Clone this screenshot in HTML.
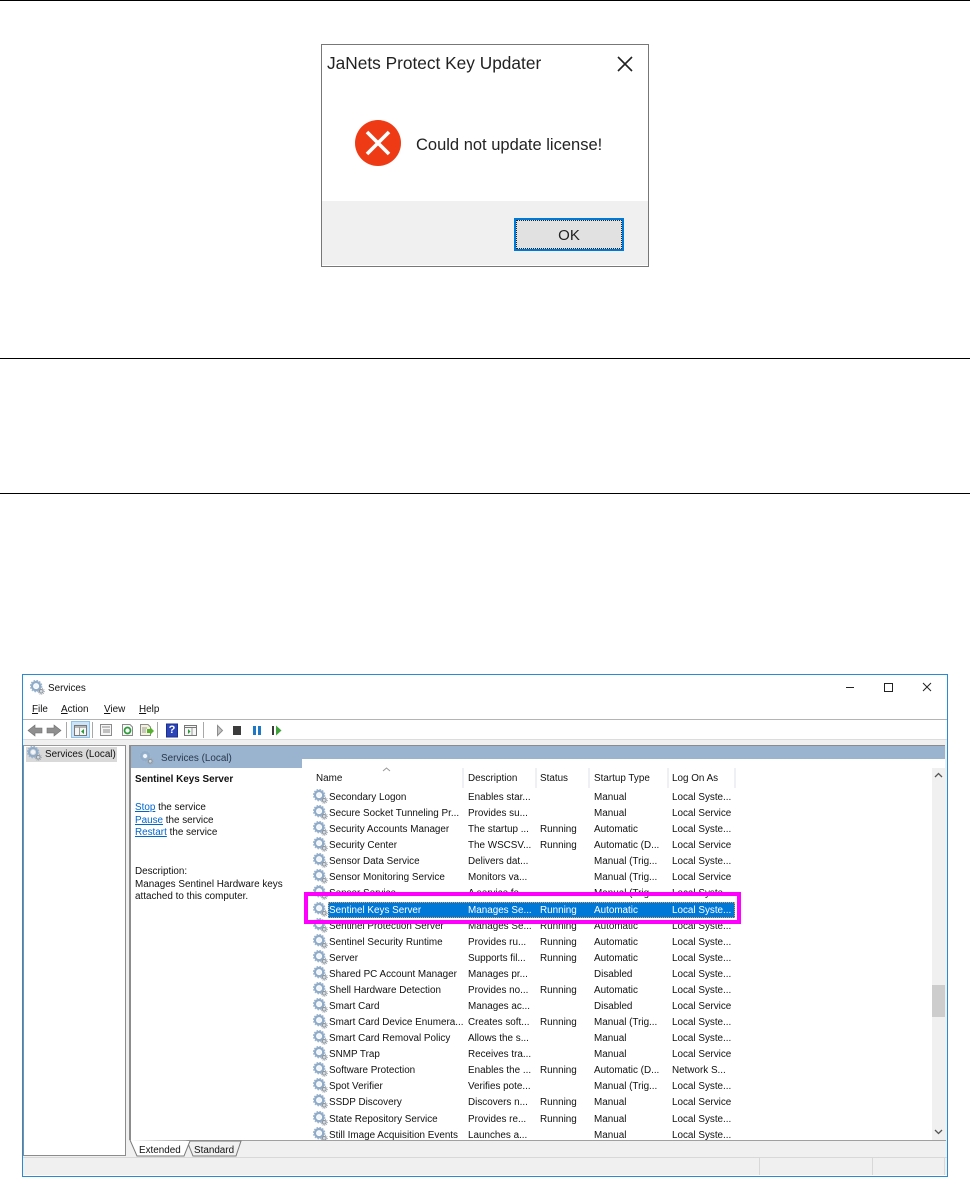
<!DOCTYPE html>
<html>
<head>
<meta charset="utf-8">
<title>Services</title>
<style>
html,body{margin:0;padding:0;background:#fff}
body{position:relative;width:970px;height:1181px;overflow:hidden;font-family:"Liberation Sans",sans-serif;color:#111}
#w{position:absolute;left:0;top:0;width:970px;height:1181px;filter:blur(.3px)}
.a{position:absolute}
.t{position:absolute;margin-top:1px;font-size:9.9px;line-height:14px;white-space:nowrap;color:#111}
.n{margin-top:0}
.rule{position:absolute;left:0;width:970px;height:1px;background:#000}
#rows{position:absolute;left:300px;top:789px;width:632px;height:351px;overflow:hidden}
.r{position:relative;height:16.09px;font-size:9.9px;line-height:16px;white-space:nowrap;color:#111}
.r svg{position:absolute;left:13px;top:0;width:15px;height:15px}
.r span{position:absolute;top:0}
.r span:nth-of-type(1){left:29px}
.r span:nth-of-type(2){left:168px}
.r span:nth-of-type(3){left:240px}
.r span:nth-of-type(4){left:294px}
.r span:nth-of-type(5){left:372px}
.r span{top:1px}
.sel{color:#fff}
.sel:before{content:"";position:absolute;left:28px;top:0;width:405px;height:14px;background:#0078d7;border:1px dotted #f0a050}
.h{position:absolute;top:768px;width:2px;height:20px;background:#eef0f3}
a{color:#0066cc;text-decoration:underline}
</style>
</head>
<body>
<svg width="0" height="0" style="position:absolute">
<symbol id="g" viewBox="0 0 16 16">
<circle cx="6.5" cy="6.5" r="4.4" fill="none" stroke="#8fabc8" stroke-width="2.4"/>
<circle cx="6.5" cy="6.5" r="5.9" fill="none" stroke="#9db6cf" stroke-width="1.5" stroke-dasharray="1.8 1.3"/>
<circle cx="6.5" cy="6.5" r="2.2" fill="#f2f6fa"/>
<circle cx="12" cy="12" r="2" fill="#d4dae0" stroke="#8a939c" stroke-width="1.1"/>
<circle cx="12" cy="12" r="3.3" fill="none" stroke="#a0a8b0" stroke-width="1" stroke-dasharray="1 1"/>
</symbol>
</svg>
<div id="w">
<div class="rule" style="top:0"></div>
<div class="rule" style="top:358px"></div>
<div class="rule" style="top:493px"></div>

<!-- Dialog -->
<div class="a" style="left:321px;top:44px;width:326px;height:221px;border:1px solid #777;background:#fff"></div>
<div class="a" style="left:322px;top:201px;width:326px;height:64px;background:#f0f0f0"></div>
<div class="t n" style="left:327px;top:52px;font-size:17.3px;line-height:22px;color:#222">JaNets Protect Key Updater</div>
<svg class="a" style="left:616px;top:55px" width="18" height="18" viewBox="0 0 18 18"><path d="M2 2L16 16M16 2L2 16" stroke="#222" stroke-width="1.6" fill="none"/></svg>
<svg class="a" style="left:354px;top:119px" width="48" height="48" viewBox="0 0 48 48"><circle cx="24" cy="24" r="23" fill="#ee3b16"/><path d="M13 13L35 35M35 13L13 35" stroke="#fff" stroke-width="3.6" fill="none"/></svg>
<div class="t" style="left:416px;top:134px;font-size:16.5px;line-height:20px;color:#222">Could not update license!</div>
<div class="a" style="left:514px;top:218px;width:106px;height:29px;border:2px solid #0078d7;background:#e1e1e1"></div>
<div class="a" style="left:516px;top:220px;width:106px;height:29px;border:1px dotted #222;box-sizing:border-box"></div>
<div class="t" style="left:514px;width:110px;top:225px;text-align:center;font-size:15px;line-height:20px;color:#222">OK</div>

<!-- Services window -->
<div class="a" style="left:22px;top:674px;width:924px;height:501px;border:1px solid #2a8ad4;background:#fff"></div>
<div class="a" style="left:23px;top:719px;width:924px;height:1px;background:#b4b4b4"></div>
<div class="a" style="left:23px;top:739px;width:924px;height:418px;background:#f0f0f0"></div>
<div class="a" style="left:23px;top:739px;width:924px;height:1px;background:#dcdcdc"></div>
<div class="a" style="left:23px;top:1157px;width:924px;height:18px;background:#f0f0f0;border-top:1px solid #d8d8d8;box-sizing:border-box"></div>
<div class="a" style="left:759px;top:1157px;width:1px;height:18px;background:#d8d8d8"></div>
<div class="a" style="left:872px;top:1157px;width:1px;height:18px;background:#d8d8d8"></div>
<div class="a" style="left:944px;top:1157px;width:1px;height:18px;background:#d8d8d8"></div>

<svg class="a" style="left:30px;top:680px" width="15" height="15"><use href="#g"/></svg>
<div class="t" style="left:48px;top:681px">Services</div>
<svg class="a" style="left:846px;top:680px" width="90" height="14" viewBox="0 0 90 14"><path d="M0 7.5H8" stroke="#222" stroke-width="1"/><rect x="38.5" y="3.5" width="8" height="8" fill="none" stroke="#222"/><path d="M77 3L85 11M85 3L77 11" stroke="#222" stroke-width="1" fill="none"/></svg>

<div class="t n" style="left:32px;top:703px"><u>F</u>ile</div>
<div class="t n" style="left:61px;top:703px"><u>A</u>ction</div>
<div class="t n" style="left:104px;top:703px"><u>V</u>iew</div>
<div class="t n" style="left:139px;top:703px"><u>H</u>elp</div>

<!-- Toolbar -->
<svg class="a" style="left:23px;top:720px" width="270" height="19" viewBox="23 720 270 19">
<path d="M28 730.5L35 725V728H42V733H35V736Z" fill="#8f8f8f" stroke="#6f6f6f" stroke-width=".6"/>
<path d="M61 730.5L54 725V728H47V733H54V736Z" fill="#8f8f8f" stroke="#6f6f6f" stroke-width=".6"/>
<rect x="66" y="722" width="1" height="16" fill="#a8a8a8"/>
<rect x="71.5" y="721.5" width="18" height="16" fill="#cce4f7" stroke="#8fc3ea"/>
<rect x="74.5" y="725.5" width="12" height="10" fill="#f6f6f6" stroke="#777"/>
<path d="M75 727H86" stroke="#777"/><path d="M79.5 727V735" stroke="#999"/><path d="M84 729V734L81 731.5Z" fill="#2a9a3a"/>
<rect x="92" y="722" width="1" height="16" fill="#a8a8a8"/>
<rect x="100.5" y="724.5" width="11" height="11" fill="#f6f6f6" stroke="#8a8a8a"/>
<path d="M102 727H110M103 730H110M103 732H110" stroke="#8a8a8a"/>
<path d="M122.5 724.5H130L132.5 727V735.5H122.5Z" fill="#f8f8f8" stroke="#8a8a8a"/>
<circle cx="127.5" cy="730.5" r="3" fill="none" stroke="#2d9a3c" stroke-width="1.7"/>
<path d="M140.5 724.5H148L150.5 727V735.5H140.5Z" fill="#f4f2dc" stroke="#8a8a8a"/>
<path d="M142 728H147M142 730H146M142 732H146" stroke="#999"/>
<path d="M147 729H150V727L154 731L150 735V733H147Z" fill="#58b030"/>
<rect x="157" y="722" width="1" height="16" fill="#a8a8a8"/>
<rect x="166.5" y="724" width="11" height="13" fill="#2b44b8" stroke="#1c2f8c"/>
<rect x="184.5" y="725.5" width="12" height="10" fill="#f6f6f6" stroke="#777"/>
<path d="M185 727.5H196" stroke="#777"/><path d="M192 728V735" stroke="#999"/><path d="M188 729V734L190.5 731.5Z" fill="#2a9a3a"/>
<rect x="203" y="722" width="1" height="16" fill="#a8a8a8"/>
<path d="M217.5 725.5L222.5 730.5L217.5 735.5Z" fill="#c4c4c4" stroke="#8c8c8c"/>
<rect x="233" y="726" width="8" height="9" fill="#3c3c3c"/>
<rect x="253" y="726" width="3" height="9" fill="#1e78c8"/><rect x="258" y="726" width="3" height="9" fill="#1e78c8"/>
<rect x="272" y="726" width="2" height="9" fill="#3c3c3c"/><path d="M276 725.5L281.5 730.5L276 735.5Z" fill="#3fa53a"/>
</svg>
<div class="t n" style="left:166px;top:723px;width:12px;text-align:center;color:#fff;font-weight:bold;font-size:11px">?</div>

<!-- Left pane -->
<div class="a" style="left:23px;top:745px;width:103px;height:411px;border:1px solid #8c8c8c;border-top:1px solid #9a9a9a;box-sizing:border-box;background:#fff"></div>
<div class="a" style="left:26px;top:747px;width:91px;height:15px;background:#d9d9d9"></div>
<svg class="a" style="left:27px;top:746px" width="15" height="15"><use href="#g"/></svg>
<div class="t" style="left:45px;top:747px">Services (Local)</div>

<!-- Right pane -->
<div class="a" style="left:130px;top:745px;width:815px;height:395px;background:#fff"></div>
<div class="a" style="left:129px;top:745px;width:2px;height:395px;background:#8c8c8c"></div>
<div class="a" style="left:131px;top:745px;width:814px;height:1px;background:#8c8c8c"></div>
<div class="a" style="left:131px;top:746px;width:814px;height:13px;background:#9ab4d0"></div>
<div class="a" style="left:131px;top:759px;width:171px;height:9px;background:#9ab4d0"></div>
<div class="a" style="left:302px;top:759px;width:4px;height:4px;background:#fff;border-radius:4px 0 0 0"></div>
<svg class="a" style="left:139px;top:750px" width="15" height="15"><use href="#g"/></svg>
<div class="t" style="left:161px;top:751px;color:#28384a">Services (Local)</div>

<div class="t" style="left:135px;top:772px;font-weight:bold">Sentinel Keys Server</div>
<div class="t" style="left:135px;top:800px"><a>Stop</a> the service</div>
<div class="t" style="left:135px;top:813px"><a>Pause</a> the service</div>
<div class="t" style="left:135px;top:825px"><a>Restart</a> the service</div>
<div class="t" style="left:135px;top:864px">Description:</div>
<div class="t" style="left:135px;top:877px">Manages Sentinel Hardware keys</div>
<div class="t" style="left:135px;top:889px">attached to this computer.</div>

<!-- Column headers -->
<div class="t" style="left:316px;top:771px">Name</div>
<div class="t" style="left:468px;top:771px">Description</div>
<div class="t" style="left:540px;top:771px">Status</div>
<div class="t" style="left:594px;top:771px">Startup Type</div>
<div class="t" style="left:672px;top:771px">Log On As</div>
<div class="h" style="left:462px"></div><div class="h" style="left:535px"></div><div class="h" style="left:588px"></div><div class="h" style="left:667px"></div><div class="h" style="left:734px"></div>
<svg class="a" style="left:382px;top:767px" width="9" height="5" viewBox="0 0 9 5"><path d="M1 4L4.5 1L8 4" fill="none" stroke="#999"/></svg>

<!-- Rows -->
<div id="rows">
<div class="r"><svg><use href="#g"/></svg><span>Secondary Logon</span><span>Enables star...</span><span></span><span>Manual</span><span>Local Syste...</span></div>
<div class="r"><svg><use href="#g"/></svg><span>Secure Socket Tunneling Pr...</span><span>Provides su...</span><span></span><span>Manual</span><span>Local Service</span></div>
<div class="r"><svg><use href="#g"/></svg><span>Security Accounts Manager</span><span>The startup ...</span><span>Running</span><span>Automatic</span><span>Local Syste...</span></div>
<div class="r"><svg><use href="#g"/></svg><span>Security Center</span><span>The WSCSV...</span><span>Running</span><span>Automatic (D...</span><span>Local Service</span></div>
<div class="r"><svg><use href="#g"/></svg><span>Sensor Data Service</span><span>Delivers dat...</span><span></span><span>Manual (Trig...</span><span>Local Syste...</span></div>
<div class="r"><svg><use href="#g"/></svg><span>Sensor Monitoring Service</span><span>Monitors va...</span><span></span><span>Manual (Trig...</span><span>Local Service</span></div>
<div class="r"><svg><use href="#g"/></svg><span>Sensor Service</span><span>A service fo...</span><span></span><span>Manual (Trig...</span><span>Local Syste...</span></div>
<div class="r sel"><svg><use href="#g"/></svg><span>Sentinel Keys Server</span><span>Manages Se...</span><span>Running</span><span>Automatic</span><span>Local Syste...</span></div>
<div class="r"><svg><use href="#g"/></svg><span>Sentinel Protection Server</span><span>Manages Se...</span><span>Running</span><span>Automatic</span><span>Local Syste...</span></div>
<div class="r"><svg><use href="#g"/></svg><span>Sentinel Security Runtime</span><span>Provides ru...</span><span>Running</span><span>Automatic</span><span>Local Syste...</span></div>
<div class="r"><svg><use href="#g"/></svg><span>Server</span><span>Supports fil...</span><span>Running</span><span>Automatic</span><span>Local Syste...</span></div>
<div class="r"><svg><use href="#g"/></svg><span>Shared PC Account Manager</span><span>Manages pr...</span><span></span><span>Disabled</span><span>Local Syste...</span></div>
<div class="r"><svg><use href="#g"/></svg><span>Shell Hardware Detection</span><span>Provides no...</span><span>Running</span><span>Automatic</span><span>Local Syste...</span></div>
<div class="r"><svg><use href="#g"/></svg><span>Smart Card</span><span>Manages ac...</span><span></span><span>Disabled</span><span>Local Service</span></div>
<div class="r"><svg><use href="#g"/></svg><span>Smart Card Device Enumera...</span><span>Creates soft...</span><span>Running</span><span>Manual (Trig...</span><span>Local Syste...</span></div>
<div class="r"><svg><use href="#g"/></svg><span>Smart Card Removal Policy</span><span>Allows the s...</span><span></span><span>Manual</span><span>Local Syste...</span></div>
<div class="r"><svg><use href="#g"/></svg><span>SNMP Trap</span><span>Receives tra...</span><span></span><span>Manual</span><span>Local Service</span></div>
<div class="r"><svg><use href="#g"/></svg><span>Software Protection</span><span>Enables the ...</span><span>Running</span><span>Automatic (D...</span><span>Network S...</span></div>
<div class="r"><svg><use href="#g"/></svg><span>Spot Verifier</span><span>Verifies pote...</span><span></span><span>Manual (Trig...</span><span>Local Syste...</span></div>
<div class="r"><svg><use href="#g"/></svg><span>SSDP Discovery</span><span>Discovers n...</span><span>Running</span><span>Manual</span><span>Local Service</span></div>
<div class="r"><svg><use href="#g"/></svg><span>State Repository Service</span><span>Provides re...</span><span>Running</span><span>Manual</span><span>Local Syste...</span></div>
<div class="r"><svg><use href="#g"/></svg><span>Still Image Acquisition Events</span><span>Launches a...</span><span></span><span>Manual</span><span>Local Syste...</span></div>
</div>

<!-- Magenta highlight -->
<div class="a" style="left:304px;top:892px;width:429px;height:24px;border:4px solid #ff00ff"></div>

<!-- Scrollbar -->
<div class="a" style="left:932px;top:768px;width:13px;height:372px;background:#f0f0f0"></div>
<div class="a" style="left:932px;top:985px;width:13px;height:32px;background:#cdcdcd"></div>
<svg class="a" style="left:934px;top:772px" width="9" height="6" viewBox="0 0 9 6"><path d="M1 5L4.5 1.5L8 5" fill="none" stroke="#555" stroke-width="1.3"/></svg>
<svg class="a" style="left:934px;top:1129px" width="9" height="6" viewBox="0 0 9 6"><path d="M1 1L4.5 4.5L8 1" fill="none" stroke="#555" stroke-width="1.3"/></svg>

<!-- Tabs -->
<div class="a" style="left:131px;top:1140px;width:815px;height:1px;background:#a0a0a0"></div>
<svg class="a" style="left:129px;top:1139px" width="120" height="19" viewBox="129 1139 120 19">
<path d="M187 1141L193 1156H236L241 1141Z" fill="#f0f0f0" stroke="#7a7a7a"/>
<path d="M130 1140L137 1156H184L190 1141" fill="#fff" stroke="#7a7a7a"/>
</svg>
<div class="t" style="left:139px;top:1143px">Extended</div>
<div class="t" style="left:194px;top:1143px">Standard</div>
</div>
</body>
</html>
